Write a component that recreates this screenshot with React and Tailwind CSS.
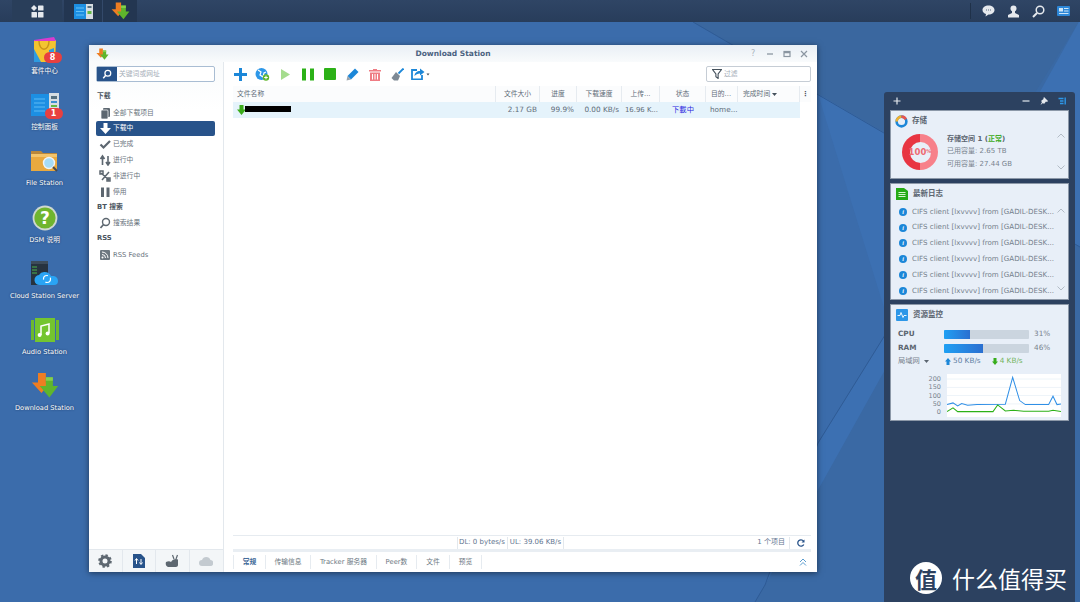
import React from "react";

const F = "font-['DejaVu_Sans','Noto_Sans_CJK_SC',sans-serif]";

const DownloadLogo = ({ s = 20 }) => (
  <svg width={s} height={s} viewBox="0 0 32 32">
    <path d="M8 1h9v11h5L12 24 1 12h7z" fill="#ee7d22" />
    <path d="M17 6h8v10h6L21 29 10 16h7z" fill="#5fb52c" />
    <path d="M17 6h8v4h-8z" fill="#86cf4c" />
  </svg>
);

const Badge = ({ n }) => (
  <span className="absolute right-[-4px] bottom-[1px] w-[18px] h-[11px] rounded-full bg-[#e8403f] text-white text-[8px] leading-[11px] text-center font-bold">{n}</span>
);

const PkgIcon = () => (
  <svg width="26" height="26" viewBox="0 0 26 26">
    <path d="M2 4h22l-1 22H2z" fill="#f4c430" />
    <path d="M2 4l20-3 2 4H2z" fill="#d93bd0" />
    <path d="M2 13v13h7z" fill="#2e9be0" />
    <path d="M7 5c0 11 10 11 10 0" stroke="#c9951a" fill="none" strokeWidth="1.4" />
    <path d="M17 14l5-2v7h-5z" fill="#2e9be0" />
  </svg>
);
const CtlIcon = () => (
  <svg width="28" height="24" viewBox="0 0 28 24">
    <rect x="0" y="1" width="18" height="22" fill="#1c8fe3" />
    <rect x="18" y="0" width="10" height="24" fill="#d6dde2" />
    <path d="M3 6h11M3 10h11M3 14h11M3 18h11" stroke="#5cbcf5" strokeWidth="1.2" />
    <rect x="20" y="3" width="6" height="3" fill="#56707f" />
    <rect x="20" y="8" width="6" height="2" fill="#3c8fd0" />
    <rect x="20" y="12" width="6" height="2" fill="#62b844" />
  </svg>
);
const FolderIcon = () => (
  <svg width="30" height="26" viewBox="0 0 30 26">
    <path d="M1 3h10l2 2h14v6H1z" fill="#b9873a" />
    <path d="M1 6h26v17H1z" fill="#e9a93f" />
    <path d="M1 6h26v3H1z" fill="#f3c46b" />
    <circle cx="19" cy="15" r="5.5" fill="#a6dcf7" stroke="#f1f4f6" strokeWidth="1.4" />
    <path d="M23 19l4 4" stroke="#4a4a4a" strokeWidth="2" />
  </svg>
);
const HelpIcon = () => (
  <svg width="26" height="26" viewBox="0 0 26 26">
    <circle cx="13" cy="13" r="12.4" fill="#cfd8d0" />
    <circle cx="13" cy="13" r="10.6" fill="#6fb52f" />
    <text x="13" y="19" textAnchor="middle" fontSize="17" fontWeight="700" fill="#fff" fontFamily="'DejaVu Sans'">?</text>
  </svg>
);
const CloudIcon = () => (
  <svg width="28" height="26" viewBox="0 0 28 26">
    <rect x="0" y="0" width="17" height="24" fill="#27333f" />
    <path d="M0 0h17v3H0z" fill="#3d4c5a" />
    <path d="M1 6h5M1 9h5M1 12h5" stroke="#4bb34c" strokeWidth="1" />
    <path d="M9 24a5 5 0 0 1-1-10 6 6 0 0 1 5-3 7 7 0 0 1 7 4h1a5 5 0 0 1 6 5 4 4 0 0 1-4 4z" fill="#2aa4f4" />
    <circle cx="16" cy="18" r="3.5" fill="none" stroke="#fff" strokeWidth="1.2" strokeDasharray="7 3" />
  </svg>
);
const AudioIcon = () => (
  <svg width="28" height="24" viewBox="0 0 28 24">
    <rect x="0" y="2" width="3" height="20" fill="#6db92f" />
    <rect x="25" y="2" width="3" height="20" fill="#6db92f" />
    <rect x="4" y="0" width="20" height="24" fill="#74c52f" />
    <path d="M10 17V8l8-2v9" stroke="#fff" strokeWidth="1.5" fill="none" />
    <circle cx="8.6" cy="17" r="2" fill="#fff" />
    <circle cx="16.6" cy="15.4" r="2" fill="#fff" />
  </svg>
);

const desktop = [
  { label: "套件中心", icon: <PkgIcon />, badge: "8" },
  { label: "控制面板", icon: <CtlIcon />, badge: "1" },
  { label: "File Station", icon: <FolderIcon /> },
  { label: "DSM 说明", icon: <HelpIcon /> },
  { label: "Cloud Station Server", icon: <CloudIcon /> },
  { label: "Audio Station", icon: <AudioIcon /> },
  { label: "Download Station", icon: <DownloadLogo s={28} /> },
];

const G = "#5d6770";
const SideIcon = ({ t }) => {
  const m = {
    all: <><rect x="4" y="1" width="7" height="9" rx="1" fill={G} /><rect x="2" y="3" width="7" height="9" rx="1" fill={G} stroke="#fff" strokeWidth=".7" /></>,
    down: <path d="M4.5 1h4v5H12L6.5 12 1 6h3.5z" fill="#fff" />,
    check: <path d="M1.5 6.5l3 3L11 3" stroke={G} strokeWidth="2.2" fill="none" />,
    updown: <path d="M3.5 11V4M1.5 5l2-3 2 3M9 2v7M7 8l2 3 2-3" stroke={G} strokeWidth="1.6" fill="none" />,
    inactive: <path d="M2 3l8 7M10 2L3 10M1 1h3v3H1zM8 8h3v3H8z" stroke={G} strokeWidth="1.5" fill="none" />,
    pause: <path d="M2 1.5h3v9.5H2zM7.5 1.5h3v9.5h-3z" fill={G} />,
    search: <><circle cx="7" cy="5" r="3.5" fill="none" stroke={G} strokeWidth="1.4" /><path d="M4.5 7.5L1.5 11" stroke={G} strokeWidth="1.7" /></>,
    rss: <><rect x="1" y="1" width="10" height="10" rx="1" fill="#6d7780" /><circle cx="3.5" cy="8.5" r="1" fill="#fff" /><path d="M3 5.5a3.5 3.5 0 0 1 3.5 3.5M3 3a6 6 0 0 1 6 6" stroke="#fff" fill="none" strokeWidth="1" /></>,
  };
  return <svg width="12" height="12" viewBox="0 0 12 12" className="shrink-0">{m[t]}</svg>;
};

const SectionLabel = ({ children }) => (
  <div className="h-[15.8px] pl-[1px] text-[6.800px] leading-[15.8px] font-bold text-[#4b5560]">{children}</div>
);
const SideRow = ({ t, label, active }) => (
  <div className={`h-[15.8px] flex items-center gap-[2px] pl-[3px] text-[6.800px] rounded-[2px] ${active ? "bg-[#28538a] text-white" : "text-[#69737d]"}`}>
    <SideIcon t={t} />
    <span>{label}</span>
  </div>
);

const Tool = ({ children, w = 22 }) => (
  <div className="flex items-center justify-center h-4 shrink-0" style={{ width: w }}>{children}</div>
);

const cols = [
  { w: 263, t: "文件名称", left: true },
  { w: 44, t: "文件大小" },
  { w: 37, t: "进度" },
  { w: 45, t: "下载速度" },
  { w: 38, t: "上传..." },
  { w: 46, t: "状态" },
  { w: 32, t: "目的...", left: true },
  { w: 62, t: "完成时间", caret: true, left: true },
];

const Cell = ({ w, right, center, className = "", children }) => (
  <div style={{ width: w }} className={`shrink-0 px-[5px] whitespace-nowrap overflow-hidden ${right ? "text-right" : center ? "text-center" : ""} ${className}`}>{children}</div>
);

const Log = () => (
  <div className="h-[15.8px] flex items-center text-[7.100px] text-[#74808b] whitespace-nowrap">
    <span className="w-2 h-2 ml-[8px] mr-[5px] rounded-full bg-[#1c87d8] text-white text-[6px] leading-2 text-center italic font-bold font-['Liberation_Serif',serif]">i</span>
    <span>CIFS client [lxvvvv] from [GADIL-DESK...</span>
  </div>
);

const Chev = ({ up, className = "" }) => (
  <svg width="8" height="5" viewBox="0 0 8 5" className={className}>
    <path d={up ? "M.5 4.5L4 1l3.500 3.500" : "M.5 .5L4 4l3.500-3.500"} stroke="#b3bcc6" fill="none" strokeWidth="1" />
  </svg>
);

const cardCls = "bg-[#e8eff8] border border-[#8c98a8] mx-[6px]";

const tabs = [
  { w: 33, t: "常规", active: true },
  { w: 45, t: "传输信息" },
  { w: 66, t: "Tracker 服务器" },
  { w: 40, t: "Peer数" },
  { w: 33, t: "文件" },
  { w: 32, t: "预览" },
];

export default function App() {
  return (
    <div className={`relative w-[1080px] h-[602px] overflow-hidden bg-[#3b6cab] flex flex-col ${F}`}>
      {/* wallpaper facets */}
      <svg className="absolute inset-0" width="1080" height="602" viewBox="0 0 1080 602">
        <polygon points="693,22 1080,22 1080,247" fill="#3a679f" />
        <polygon points="890,327 1080,20 1080,602 755,602 765,585 818,443" fill="#3a69a4" />
        <polygon points="890,327 818,443 765,585 1080,20 1080,247 885,133 818,94" fill="#3c70b2" />
        <path d="M693 22L1080 247" stroke="#2f5b95" strokeWidth="1" />
        <path d="M890 327L818 443L765 585L755 602" stroke="#2f5b95" strokeWidth="1" fill="none" />
      </svg>

      {/* taskbar */}
      <div className="relative h-[22px] shrink-0 bg-gradient-to-b from-[#2f4565] to-[#283d5b] flex items-stretch">
        <div className="w-[50px] ml-[12px] flex items-center justify-center bg-[#293e5a]">
          <svg width="13" height="13" viewBox="0 0 13 13">
            <path d="M3 0l3 3-3 3-3-3z" fill="#e5e9ee" />
            <rect x="7" y="0.5" width="5.5" height="5" rx=".6" fill="#e5e9ee" />
            <rect x="0.5" y="7" width="5.5" height="5.5" rx=".6" fill="#e5e9ee" />
            <rect x="7" y="7" width="5.5" height="5.5" rx=".6" fill="#e5e9ee" />
          </svg>
        </div>
        <div className="w-[38px] ml-[2px] flex items-center justify-center bg-[#233651]">
          <svg width="19" height="15" viewBox="0 0 19 15">
            <rect width="12" height="15" fill="#1c8fe3" />
            <rect x="12" width="7" height="15" fill="#d6dde2" />
            <path d="M2 4h8M2 7.500h8M2 11h8" stroke="#64c0f5" strokeWidth="1" />
            <rect x="13.500" y="2" width="4" height="2" fill="#56707f" />
            <rect x="13.500" y="7" width="4" height="3" fill="#62b844" />
          </svg>
        </div>
        <div className="w-[35px] flex items-center justify-center bg-[#233651] border-l border-[#33496a]">
          <DownloadLogo s={19} />
        </div>
        <div className="ml-auto mr-[10px] flex items-center gap-[12px] my-[3px] pl-[11px] border-l border-[#1f3149]">
          <svg width="13" height="12" viewBox="0 0 13 12"><path d="M6.500 0.500c3.500 0 6 2 6 4.500s-2.500 4.500-6 4.500l-3 2 .5-2.500C2 8.500.5 7 .5 5 .5 2.500 3 .5 6.500.5z" fill="#e5e9ee" /><path d="M4 5h1M6 5h1M8 5h1" stroke="#5a6c80" strokeWidth="1" /></svg>
          <svg width="13" height="13" viewBox="0 0 13 13"><circle cx="6.500" cy="3.500" r="3" fill="#e5e9ee" /><path d="M5 6h3v2l4 2v2.500H1V10l4-2z" fill="#e5e9ee" /></svg>
          <svg width="13" height="13" viewBox="0 0 13 13"><circle cx="8" cy="5" r="3.800" fill="none" stroke="#e5e9ee" strokeWidth="1.500" /><path d="M5 8l-4 4" stroke="#e5e9ee" strokeWidth="2" /></svg>
          <svg width="13" height="10" viewBox="0 0 13 10"><rect width="13" height="10" rx="1" fill="#2d87d8" /><rect x="2" y="2" width="4" height="3.500" fill="#cfe6f8" /><path d="M7 2.500h4.500M7 5h4.500M2 7.500h9.500" stroke="#cfe6f8" strokeWidth="1" /></svg>
        </div>
      </div>

      {/* desktop icons */}
      <div className="relative w-[89px] flex flex-col items-center pt-[12px]">
        {desktop.map((d) => (
          <div key={d.label} className="h-[56.200px] w-[89px] flex flex-col items-center">
            <div className="relative h-[30px] flex items-center justify-center">
              {d.icon}
              {d.badge && <Badge n={d.badge} />}
            </div>
            <div className="mt-[2px] text-[6.700px] leading-[10px] text-white whitespace-nowrap [text-shadow:0_0_2px_#1b3358]">{d.label}</div>
          </div>
        ))}
      </div>

      {/* window */}
      <div className="absolute left-[89px] top-[45px] w-[728px] h-[527px] bg-white shadow-[0_1px_6px_rgba(0,0,0,.5)] flex flex-col">
        <div className="h-[17px] shrink-0 bg-gradient-to-b from-[#e9eff5] to-[#f9fbfc] flex items-center relative">
          <div className="absolute left-[7px] top-[3px]"><DownloadLogo s={13} /></div>
          <div className="w-full pt-[1px] text-center text-[7.500px] font-bold text-[#4b6280]">Download Station</div>
          <div className="absolute right-[9px] top-[4px] flex gap-[9px] items-center">
            <span className="text-[8px] leading-[9px] text-[#a9b3bc] w-[8px] text-center">?</span>
            <svg width="8" height="8" viewBox="0 0 8 8"><path d="M1 4h6" stroke="#8b96a1" strokeWidth="1.300" /></svg>
            <svg width="8" height="8" viewBox="0 0 8 8"><rect x="1" y="1.500" width="6" height="5" fill="none" stroke="#8b96a1" strokeWidth="1.200" /><path d="M1 2.500h6" stroke="#8b96a1" strokeWidth="1.500" /></svg>
            <svg width="8" height="8" viewBox="0 0 8 8"><path d="M1 1l6 6M7 1L1 7" stroke="#8b96a1" strokeWidth="1.200" /></svg>
          </div>
        </div>
        <div className="flex-1 flex min-h-0">
          {/* sidebar */}
          <div className="w-[135px] shrink-0 flex flex-col border-r border-[#e3e8ed]">
            <div className="flex-1 px-[7px] pt-[4px] bg-gradient-to-b from-[#f9fbfc] to-white to-[10%]">
              <div className="h-4 flex border border-[#a9bdd3] rounded-[2px] bg-white mb-[7px] w-[119px]">
                <div className="w-[20px] bg-[#28538a] flex items-center justify-center">
                  <svg width="10" height="10" viewBox="0 0 12 12"><circle cx="7" cy="5" r="3.500" fill="none" stroke="#fff" strokeWidth="1.500" /><path d="M4.500 7.500L1.500 11" stroke="#fff" strokeWidth="1.800" /></svg>
                </div>
                <span className="pl-[2px] text-[6.800px] leading-[14px] text-[#a5aeb7]">关键词或网址</span>
              </div>
              <div className="w-[119px]">
                <SectionLabel>下载</SectionLabel>
                <SideRow t="all" label="全部下载项目" />
                <SideRow t="down" label="下载中" active />
                <SideRow t="check" label="已完成" />
                <SideRow t="updown" label="进行中" />
                <SideRow t="inactive" label="非进行中" />
                <SideRow t="pause" label="停用" />
                <SectionLabel>BT 搜索</SectionLabel>
                <SideRow t="search" label="搜索结果" />
                <SectionLabel>RSS</SectionLabel>
                <SideRow t="rss" label="RSS Feeds" />
              </div>
            </div>
            <div className="h-[23px] shrink-0 bg-[#f3f6f8] border-t border-[#e3e8ed] grid grid-cols-4 divide-x divide-[#e3e8ed]">
              <div className="flex items-center justify-center">
                <svg width="14" height="14" viewBox="0 0 14 14"><circle cx="7" cy="7" r="4" fill="none" stroke="#5d6770" strokeWidth="3" /><circle cx="7" cy="7" r="5.900" fill="none" stroke="#5d6770" strokeWidth="1.800" strokeDasharray="2.400 2.200" /></svg>
              </div>
              <div className="flex items-center justify-center">
                <svg width="12" height="14" viewBox="0 0 12 14"><path d="M0 0h8l4 4v10H0z" fill="#28538a" /><path d="M3.500 10V5M2 6.500l1.500-2 1.500 2M8 5v5M6.500 8.500l1.500 2 1.500-2" stroke="#fff" strokeWidth="1" fill="none" /></svg>
              </div>
              <div className="flex items-center justify-center">
                <svg width="14" height="14" viewBox="0 0 14 14"><path d="M1 8c2-1 4-1 5 0 1-2 3-3 5-3l2 .5V11c0 1-1 2-2 2H4C2 13 0 11 1 8z" fill="#5d6770" /><path d="M9 5L7.500 1M11 5l1.500-4" stroke="#5d6770" strokeWidth="1.200" /></svg>
              </div>
              <div className="flex items-center justify-center">
                <svg width="14" height="12" viewBox="0 0 14 12"><path d="M3 11a3 3 0 0 1 0-6 4.500 4.500 0 0 1 8.500 0 3 3 0 0 1-.5 6z" fill="#c3cad0" /></svg>
              </div>
            </div>
          </div>

          {/* main */}
          <div className="flex-1 flex flex-col min-w-0 pl-[9px] pr-[6px]">
            <div className="h-[24px] shrink-0 flex items-center">
              <div className="flex items-center ml-[-4px]">
                <Tool><svg width="13" height="13" viewBox="0 0 13 13"><path d="M6.500 0v13M0 6.500h13" stroke="#1c87d8" strokeWidth="3" /></svg></Tool>
                <Tool w={23}><svg width="15" height="14" viewBox="0 0 15 14"><circle cx="6.500" cy="7" r="6" fill="#2d97e8" /><path d="M3 3l3 2-1 3 3 2 1-4 2-1" stroke="#fff" strokeWidth="1.200" fill="none" /><circle cx="11" cy="10.500" r="3.200" fill="#5fb52c" /><path d="M9.200 10.500h3.600M11 8.700v3.600" stroke="#fff" /></svg></Tool>
                <Tool w={22}><svg width="11" height="13" viewBox="0 0 11 13"><path d="M1 1l9 5.500L1 12z" fill="#a5dc8e" /></svg></Tool>
                <Tool w={23}><svg width="12" height="13" viewBox="0 0 12 13"><path d="M0 .5h4v12H0zM8 .5h4v12H8z" fill="#2cb117" /></svg></Tool>
                <Tool w={22}><svg width="12" height="12" viewBox="0 0 12 12"><rect width="12" height="12" rx="1" fill="#2cb117" /></svg></Tool>
                <Tool w={22}><svg width="13" height="13" viewBox="0 0 13 13"><path d="M9 .5l3.500 3.500L5 11.500 1.500 8z" fill="#1c87d8" /><path d="M1.500 8L.5 12.500 5 11.500z" fill="#9aa4ad" /></svg></Tool>
                <Tool w={23}><svg width="12" height="13" viewBox="0 0 12 13"><path d="M4 1h4v1h4v1.500H0V2h4z" fill="#ef7c84" /><path d="M1 4.500h10V13H1z" fill="#ef7c84" /><path d="M3.500 6v5.500M6 6v5.500M8.500 6v5.500" stroke="#fff" /></svg></Tool>
                <Tool w={22}><svg width="13" height="13" viewBox="0 0 13 13"><path d="M12.500.5L7.500 5.500" stroke="#1c87d8" strokeWidth="1.800" /><path d="M5 4l4 4-2 4.500H3L0.500 10z" fill="#7e8994" /></svg></Tool>
                <Tool w={24}>
                  <svg width="19" height="12" viewBox="0 0 19 12"><path d="M6 2H1v9.500h10V7" fill="none" stroke="#1c87d8" strokeWidth="1.800" /><path d="M3.500 8c0-3 2.500-5 5.500-5V.5L13.500 4 9 7.500V5.500C6.500 5.500 5 6.500 3.500 8z" fill="#1c87d8" /><path d="M15.500 5.500h3l-1.500 2z" fill="#44505b" /></svg>
                </Tool>
              </div>
              <div className="ml-auto flex items-center w-[105px] h-4 border border-[#c6cdd5] rounded-[2px] bg-white">
                <svg width="10" height="10" viewBox="0 0 9 9" className="ml-[5px]"><path d="M.5 .5h8L5.500 4.500v4L3.500 7V4.500z" fill="none" stroke="#44505b" strokeWidth="1" /></svg>
                <span className="ml-[2px] text-[6.800px] text-[#a5aeb7]">过滤</span>
              </div>
            </div>
            <div className="h-[16px] shrink-0 flex items-center text-[6.800px] text-[#5f6c79] bg-[#fbfcfd]">
              {cols.map((c, i) => (
                <div key={i} style={{ width: c.w }} className={`h-full shrink-0 flex items-center border-r border-[#e6ebf0] whitespace-nowrap ${i === 0 ? "pl-[4px]" : "px-[5px]"} ${c.left ? "" : "justify-center"}`}>
                  {c.t}
                  {c.caret && <svg width="5" height="3" viewBox="0 0 5 3" className="ml-[2px]"><path d="M0 0h5L2.500 3z" fill="#44505b" /></svg>}
                </div>
              ))}
              <div className="flex-1 text-center font-bold text-[#44505b]">⋮</div>
            </div>
            <div className="h-[16px] w-[567px] shrink-0 flex items-center bg-[#e5f3fb] text-[7.300px] text-[#5f6c79]">
              <Cell w={263} className="flex items-center pl-[4px]">
                <svg width="9" height="10" viewBox="0 0 9 10" className="shrink-0"><path d="M2.500 0h4v4.500H9L4.500 10 0 4.500h2.500z" fill="#3cac1c" /></svg>
                <span className="w-[46px] h-[6px] bg-black ml-[-1px] mb-[2px]" />
              </Cell>
              <Cell w={44} right className="pr-[3px]">2.17 GB</Cell>
              <Cell w={37} right className="pr-[3px]">99.9%</Cell>
              <Cell w={45} right className="pl-0 pr-[3px]">0.00 KB/s</Cell>
              <Cell w={38} right className="pl-0 pr-[2px] text-[6.900px]">16.96 K...</Cell>
              <Cell w={46} center className="text-[#2a28e0]">下載中</Cell>
              <Cell w={32} className="pl-[4px]">home...</Cell>
            </div>
            <div className="flex-1" />
            <div className="h-[14px] shrink-0 border-t border-[#e6ebf0] flex items-center text-[7px] text-[#5f7590]">
              <div className="ml-[224px] flex items-center h-[12px] border-x border-[#e3e8ed] pl-[1px] pr-[2px]">DL: 0 bytes/s</div>
              <div className="flex items-center h-[12px] border-r border-[#e3e8ed] pl-[2px] pr-[2px]">UL: 39.06 KB/s</div>
              <div className="ml-auto pr-[4px] h-[12px] flex items-center border-r border-[#e3e8ed]">1 个项目</div>
              <div className="w-[21px] flex justify-center">
                <svg width="8" height="8" viewBox="0 0 8 8"><path d="M6.800 5.500A3.200 3.200 0 1 1 6.500 2" fill="none" stroke="#28538a" strokeWidth="1.300" /><path d="M7.500 .5v3h-3z" fill="#28538a" /></svg>
              </div>
            </div>
            <div className="h-[3px] shrink-0 bg-[#e9eef3]" />
            <div className="h-[20px] shrink-0 flex items-center text-[6.800px] text-[#6d7882]">
              {tabs.map((t, i) => (
                <div key={t.t} style={{ width: t.w }} className={`h-[14px] flex items-center justify-center border-r border-[#e6ebf0] whitespace-nowrap ${i === 0 ? "border-l" : ""} ${t.active ? "font-bold text-[#3d6796]" : ""}`}>{t.t}</div>
              ))}
              <svg width="8" height="8" viewBox="0 0 8 8" className="ml-auto mr-[4px]"><path d="M1 4l3-3 3 3M1 7.500l3-3 3 3" stroke="#5a9ccf" fill="none" strokeWidth="1" /></svg>
            </div>
          </div>
        </div>
      </div>

      {/* widgets panel */}
      <div className="absolute left-[884px] top-[92px] w-[191px] h-[510px] bg-[#2c4160] rounded-t-[3px] flex flex-col">
        <div className="h-[18px] shrink-0 flex items-center pl-[9px] pr-[9px] gap-[10px]">
          <svg width="8" height="8" viewBox="0 0 8 8" className="mr-auto"><path d="M4 .5v7M.5 4h7" stroke="#e5e9ee" strokeWidth="1.200" /></svg>
          <svg width="8" height="8" viewBox="0 0 8 8"><path d="M.5 4h7" stroke="#e5e9ee" strokeWidth="1.200" /></svg>
          <svg width="8" height="8" viewBox="0 0 8 8"><path d="M4 0l4 4-1 1-1-.5L4 7 3 6 .5 8 2 5 1 4l2.500-2L3.500 1z" fill="#e5e9ee" /></svg>
          <svg width="8" height="8" viewBox="0 0 8 8"><path d="M.5 1.500H5.500M2 4h3.500M2 6.500h3.500" stroke="#2d97e8" strokeWidth="1.400" /><path d="M7.200 .5v7" stroke="#2d97e8" strokeWidth="1.400" /></svg>
        </div>

        {/* storage */}
        <div className={`${cardCls} h-[69px] shrink-0`}>
          <div className="h-[20px] flex items-center pl-[4px] gap-[4px] text-[7.500px] text-[#5b6570]">
            <svg width="13" height="13" viewBox="0 0 12 12"><circle cx="6" cy="6" r="4.500" fill="none" stroke="#1c87d8" strokeWidth="2.400" /><path d="M1.500 6A4.500 4.500 0 0 1 6 1.500" fill="none" stroke="#f0b12f" strokeWidth="2.400" /><path d="M6 1.500A4.500 4.500 0 0 1 10 4" fill="none" stroke="#e8554f" strokeWidth="2.400" /></svg>
            <span className="font-bold">存储</span>
          </div>
          <div className="flex relative">
            <div className="ml-[11px] w-[36px] h-[36px] rounded-full bg-[conic-gradient(#f7808a_0_50%,#e83542_50%_100%)] flex items-center justify-center mt-[3px] relative">
              <div className="w-[21px] h-[21px] rounded-full bg-[#e8eff8]" />
              <span className="absolute inset-0 flex items-center justify-center text-[8.500px] font-bold text-[#ee6a72] whitespace-nowrap">100<span className="text-[5px]">%</span></span>
            </div>
            <div className="ml-[9px] mt-[2px] text-[7px] leading-[12.400px] text-[#78838e] whitespace-nowrap">
              <div className="font-bold text-[#5b6570]">存储空间 1 (<span className="text-[#3caa22]">正常</span>)</div>
              <div>已用容量: 2.65 TB</div>
              <div>可用容量: 27.44 GB</div>
            </div>
            <div className="absolute right-[3px] top-[1.500px] h-[37px] flex flex-col justify-between">
              <Chev up /><Chev />
            </div>
          </div>
        </div>

        {/* logs */}
        <div className={`${cardCls} h-[117px] mt-[4px] shrink-0 relative`}>
          <div className="h-[19px] flex items-center pl-[5px] gap-[5px] text-[7.500px] text-[#5b6570]">
            <svg width="12" height="12" viewBox="0 0 12 12"><path d="M0 0h8l4 3v9H0z" fill="#25ab15" /><path d="M2.500 4.500h7M2.500 6.500h7M2.500 8.500h7" stroke="#d6f4d0" strokeWidth="1" /></svg>
            <span className="font-bold">最新日志</span>
          </div>
          <div className="flex flex-col mt-[1px]">
            <Log /><Log /><Log /><Log /><Log /><Log />
          </div>
          <div className="absolute right-[3px] top-[24px] h-[83px] flex flex-col justify-between">
            <Chev up /><Chev />
          </div>
        </div>

        {/* monitor */}
        <div className={`${cardCls} h-[117px] mt-[4px] shrink-0`}>
          <div className="h-[19px] flex items-center pl-[5px] gap-[5px] text-[7.500px] text-[#5b6570]">
            <svg width="12" height="12" viewBox="0 0 12 12"><rect width="12" height="12" rx="1" fill="#2d97e8" /><path d="M1.500 6.500h2.500l1-3 2 5 1-2h2.500" stroke="#fff" fill="none" strokeWidth=".9" /></svg>
            <span className="font-bold">资源监控</span>
          </div>
          <div className="px-[7px] mt-[6px] text-[7.300px] text-[#78838e] flex flex-col gap-[5px]">
            <div className="flex items-center h-[9px]">
              <span className="w-[46px] font-bold text-[#5b6570]">CPU</span>
              <div className="w-[85px] h-[9px] bg-[#cbd5df] rounded-[1px] overflow-hidden"><div className="w-[31%] h-full bg-gradient-to-r from-[#1ea0f4] to-[#2a6fd0]" /></div>
              <span className="ml-[5px]">31%</span>
            </div>
            <div className="flex items-center h-[9px]">
              <span className="w-[46px] font-bold text-[#5b6570]">RAM</span>
              <div className="w-[85px] h-[9px] bg-[#cbd5df] rounded-[1px] overflow-hidden"><div className="w-[46%] h-full bg-gradient-to-r from-[#1ea0f4] to-[#2a6fd0]" /></div>
              <span className="ml-[5px]">46%</span>
            </div>
          </div>
          <div className="flex items-center h-[12px] mt-[2px] pl-[7px] text-[7.300px] text-[#78838e] whitespace-nowrap">
            <span className="w-[40px] flex items-center gap-[2px]">局域网<svg width="5" height="3" viewBox="0 0 5 3" className="ml-[2px]"><path d="M0 0h5L2.500 3z" fill="#5b6570" /></svg></span>
            <svg width="6" height="7" viewBox="0 0 6 7" className="ml-[7px]"><path d="M3 0l3 3.500H4.500V7h-3V3.500H0z" fill="#1c87d8" /></svg>
            <span className="ml-[2px] text-[#5d7ea3]">50 KB/s</span>
            <svg width="6" height="7" viewBox="0 0 6 7" className="ml-[11px]"><path d="M1.500 0h3v3.500H6L3 7 0 3.500h1.500z" fill="#37ad1c" /></svg>
            <span className="ml-[2px] text-[#72b460]">4 KB/s</span>
          </div>
          <div className="flex mt-[7px] pl-[26px]">
            <div className="w-[30px] h-[43px] text-right pr-[6px] pt-[1px] text-[6.500px] leading-[8.300px] text-[#78838e]">
              <div>200</div><div>150</div><div>100</div><div>50</div><div>0</div>
            </div>
            <svg width="114" height="43" viewBox="200 237 342 128" preserveAspectRatio="none" className="bg-white">
              <path d="M200 252h342M200 277h342M200 301h342M200 326h342" stroke="#e6eef6" strokeWidth="2" />
              <polyline fill="none" stroke="#2f8fe6" strokeWidth="3" points="200,328 218,323 232,332 244,325 262,330 290,328 375,327 397,247 418,316 435,328 505,328 518,303 530,328 542,326" />
              <polyline fill="none" stroke="#2cb117" strokeWidth="3" points="200,349 218,338 232,349 338,349 352,329 375,347 400,345 430,348 505,348 518,345 542,349" />
            </svg>
          </div>
        </div>
      </div>

      {/* watermark */}
      <div className="absolute left-[910px] top-[562px] flex items-center gap-[10px] text-white">
        <div className="w-[32px] h-[32px] rounded-full bg-white text-[#2c4160] text-[22px] font-bold leading-[32px] text-center font-['Noto_Sans_CJK_SC',sans-serif]">值</div>
        <div className="text-[23px] leading-[32px] font-['Noto_Sans_CJK_SC',sans-serif]">什么值得买</div>
      </div>
    </div>
  );
}
